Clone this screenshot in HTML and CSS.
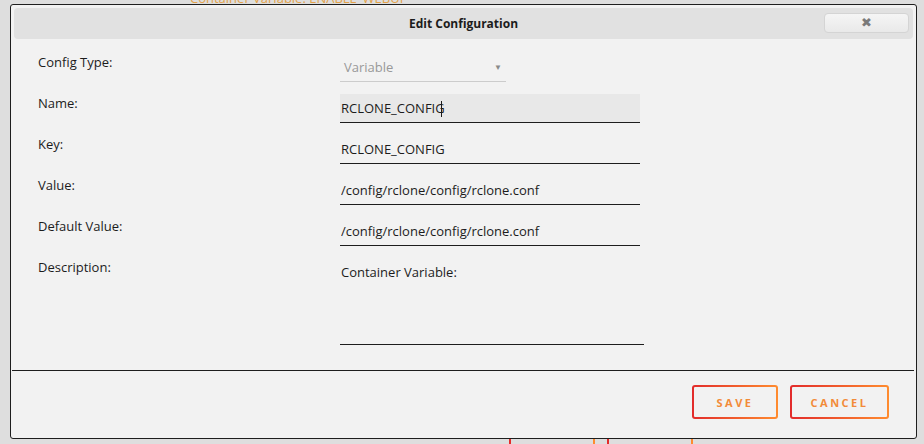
FILE: index.html
```html
<!DOCTYPE html>
<html lang="en">

<head>
    <meta charset="UTF-8">
    <title>Edit Configuration</title>
    <link rel="stylesheet" href="styles.css">
</head>

<body>
    <div class="backdrop">
        <div class="behind-top">Container Variable: ENABLE_WEBUI</div>
        <div class="behind-bottom">
            <span class="behind-text">Container Path: /config/rclone/config/rclone.conf</span>
            <span class="behind-btn"></span>
            <span class="behind-btn"></span>
        </div>
    </div>

    <div class="dialog">
        <div class="titlebar">
            <span class="title">Edit Configuration</span>
            <button class="close-button">&#10006;</button>
        </div>

        <div class="content">
            <div class="row">
                <label>Config Type:</label>
                <div class="select">
                    <span>Variable</span>
                    <span class="arrow">&#9660;</span>
                </div>
            </div>
            <div class="row">
                <label>Name:</label>
                <div class="field focused">
                    <input type="text" value="RCLONE_CONFIG">
                    <span class="caret"></span>
                </div>
            </div>
            <div class="row">
                <label>Key:</label>
                <div class="field">
                    <input type="text" value="RCLONE_CONFIG">
                </div>
            </div>
            <div class="row">
                <label>Value:</label>
                <div class="field">
                    <input type="text" value="/config/rclone/config/rclone.conf">
                </div>
            </div>
            <div class="row">
                <label>Default Value:</label>
                <div class="field">
                    <input type="text" value="/config/rclone/config/rclone.conf">
                </div>
            </div>
            <div class="row">
                <label>Description:</label>
                <textarea>Container Variable:</textarea>
            </div>
        </div>

        <div class="buttonpane">
            <button class="action-button">Save</button>
            <button class="action-button">Cancel</button>
        </div>
    </div>
</body>

</html>
```

FILE: styles.css
```css
body {
    margin: 0;
    height: 444px;
    overflow: hidden;
    background-color: #dedede;
    font-family: "Open Sans", "Noto Sans", sans-serif;
    font-size: 13px;
    color: #1c1c1c;
}

.backdrop {
    position: relative;
    height: 444px;
}

.behind-top {
    position: absolute;
    left: 190px;
    top: -11px;
    color: #e3a24a;
    font-size: 13px;
}

.behind-bottom {
    position: absolute;
    left: 0;
    top: 439px;
    display: flex;
    align-items: flex-start;
}

.behind-text {
    width: 509px;
    padding-left: 190px;
    box-sizing: border-box;
    color: #555;
    margin-top: 1px;
}

.behind-btn {
    width: 86px;
    height: 30px;
    margin-top: -12px;
    margin-right: 12px;
    border: 2px solid transparent;
    box-sizing: border-box;
    background: linear-gradient(#dedede, #dedede) padding-box,
        linear-gradient(90deg, #e22b2b, #ff8c2f) border-box;
}

.dialog {
    position: absolute;
    left: 10px;
    top: 4px;
    width: 907px;
    height: 435px;
    box-sizing: border-box;
    padding: 3px;
    background-color: #f2f2f2;
    border: 1px solid #1e1e1e;
    border-radius: 3px;
    display: flex;
    flex-direction: column;
}

.titlebar {
    height: 31px;
    flex: none;
    background-color: #e1e1e1;
    border-radius: 4px;
    display: flex;
    align-items: center;
    justify-content: center;
    position: relative;
}

.title {
    font-size: 12px;
    font-weight: bold;
    color: #1c1c1c;
}

.close-button {
    position: absolute;
    right: 4px;
    top: 5px;
    width: 85px;
    height: 20px;
    padding: 0;
    border: 1px solid #d4d4d4;
    border-radius: 4px;
    background: linear-gradient(#f5f5f5, #e9e9e9);
    color: #7a7a7a;
    font-size: 13px;
    line-height: 18px;
    cursor: pointer;
}

.content {
    flex: 1;
    padding: 14px 0 0 24px;
}

.row {
    display: grid;
    grid-template-columns: 302px auto;
    align-items: start;
    margin-bottom: 12px;
}

.row label {
    line-height: 18px;
}

.select {
    width: 166px;
    height: 29px;
    box-sizing: border-box;
    border-bottom: 1px solid #cccccc;
    padding: 0 4px;
    display: flex;
    align-items: center;
    justify-content: space-between;
    color: #999999;
}

.arrow {
    font-size: 8px;
    color: #8a8a8a;
    margin-top: -2px;
}

.field {
    position: relative;
    width: 300px;
}

.field input {
    width: 300px;
    height: 29px;
    box-sizing: border-box;
    padding: 0 1px;
    border: none;
    border-bottom: 1px solid #1e1e1e;
    background: transparent;
    font-family: inherit;
    font-size: 13px;
    color: #1c1c1c;
    outline: none;
}

.field.focused input {
    background-color: #e8e8e8;
}

.caret {
    position: absolute;
    left: 101px;
    top: 7px;
    width: 1px;
    height: 16px;
    background-color: #1c1c1c;
}

.row textarea {
    width: 304px;
    height: 87px;
    box-sizing: border-box;
    padding: 5px 1px;
    border: none;
    border-bottom: 1px solid #1e1e1e;
    background: transparent;
    font-family: inherit;
    font-size: 13px;
    line-height: 18px;
    color: #1c1c1c;
    resize: none;
    outline: none;
}

.buttonpane {
    flex: none;
    margin: 0 -1px -3px -2px;
    height: 68px;
    box-sizing: border-box;
    border-top: 1px solid #1e1e1e;
    display: flex;
    justify-content: flex-end;
    align-items: flex-start;
    padding: 14px 25px 0 0;
    gap: 12px;
}

.action-button {
    height: 34px;
    padding: 0 18px;
    border: 2px solid transparent;
    border-radius: 3px;
    background: linear-gradient(#f2f2f2, #f2f2f2) padding-box,
        linear-gradient(90deg, #e22b2b, #ff8c2f) border-box;
    color: #f28b39;
    font-family: inherit;
    font-size: 11px;
    font-weight: bold;
    letter-spacing: 2.5px;
    text-transform: uppercase;
    cursor: pointer;
}

.action-button:first-child {
    width: 86px;
}

.action-button:last-child {
    width: 99px;
}
```
